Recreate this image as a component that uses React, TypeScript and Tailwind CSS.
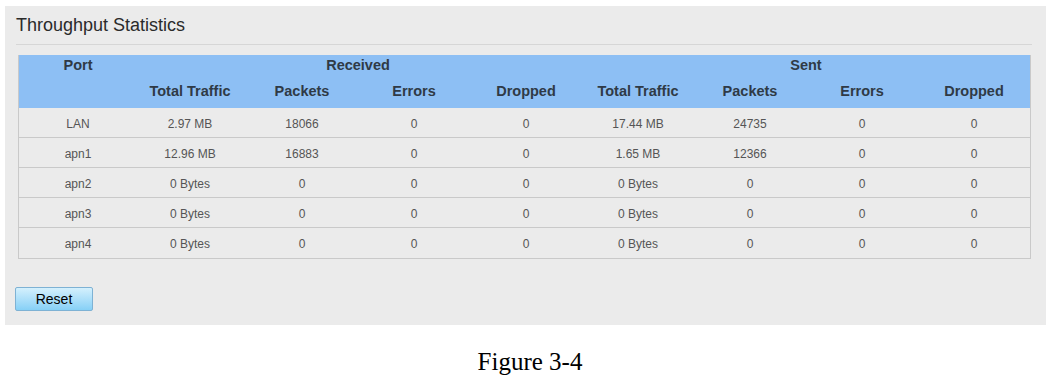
import React from 'react';

type Row = {
  port: string;
  rx: [string, string, string, string];
  tx: [string, string, string, string];
};

const rows: Row[] = [
  { port: 'LAN', rx: ['2.97 MB', '18066', '0', '0'], tx: ['17.44 MB', '24735', '0', '0'] },
  { port: 'apn1', rx: ['12.96 MB', '16883', '0', '0'], tx: ['1.65 MB', '12366', '0', '0'] },
  { port: 'apn2', rx: ['0 Bytes', '0', '0', '0'], tx: ['0 Bytes', '0', '0', '0'] },
  { port: 'apn3', rx: ['0 Bytes', '0', '0', '0'], tx: ['0 Bytes', '0', '0', '0'] },
  { port: 'apn4', rx: ['0 Bytes', '0', '0', '0'], tx: ['0 Bytes', '0', '0', '0'] },
];

const subHeads = ['Total Traffic', 'Packets', 'Errors', 'Dropped'];

const StatsTable: React.FC = () => {
  return (
    <div className="w-[1013px] ml-[13px] border-x border-b border-[#c9c9c9]">
      {/* two-row header: group labels, then column labels */}
      <div className="bg-[#8dbff4] text-[14.5px] font-bold text-[#2f3a46] pl-[3px]">
        <div className="grid grid-cols-9 h-[20px] items-center text-center">
          <div>Port</div>
          <div className="col-span-4">Received</div>
          <div className="col-span-4">Sent</div>
        </div>
        <div className="grid grid-cols-9 h-[33px] items-center text-center">
          <div />
          {[...subHeads, ...subHeads].map((h, i) => (
            <div key={i}>{h}</div>
          ))}
        </div>
      </div>
      {rows.map((r, i) => (
        <div
          key={r.port}
          className={`grid grid-cols-9 h-[30px] pt-[2px] pl-[3px] items-center text-center text-[12px] text-[#555] ${
            i < rows.length - 1 ? 'border-b border-[#c9c9c9]' : ''
          }`}
        >
          <div>{r.port}</div>
          {[...r.rx, ...r.tx].map((v, j) => (
            <div key={j}>{v}</div>
          ))}
        </div>
      ))}
    </div>
  );
};

export default function App() {
  return (
    <div className="w-[1055px] h-[381px] bg-white pt-[6px] pl-[5px] font-['Liberation_Sans',Arial,sans-serif]">
      <div className="w-[1041px] h-[319px] bg-[#ebebeb] flex flex-col">
        <div className="pl-[11px] pt-[8px] h-[38px] text-[18px] leading-[22px] text-[#2a2a2a]">
          Throughput Statistics
        </div>
        <div className="ml-[11px] w-[1016px] border-t border-[#d6d6d6]" />
        <div className="mt-[10px]">
          <StatsTable />
        </div>
        <div className="pl-[10px] mt-[28px]">
          <button className="w-[78px] h-[24px] rounded-[2px] border border-[#7eb2d4] bg-gradient-to-b from-[#d4f0fd] to-[#86d0f6] text-[14px] text-black leading-none">
            Reset
          </button>
        </div>
      </div>
      <div className="mt-[22px] text-center pl-[0px] text-[25px] leading-[30px] text-black font-['Liberation_Serif','Times_New_Roman',serif]">
        Figure 3-4
      </div>
    </div>
  );
}
